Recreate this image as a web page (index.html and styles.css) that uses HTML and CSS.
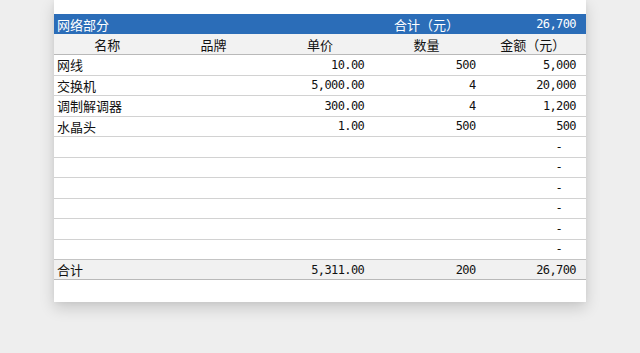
FILE: index.html
```html
<!DOCTYPE html>
<html lang="zh-CN">
<head>
<meta charset="utf-8">
<link rel="stylesheet" href="styles.css">
</head>
<body>
<div class="card">
  <div class="row bar">
    <div class="c left">网络部分</div>
    <div class="c"></div>
    <div class="c"></div>
    <div class="c center">合计（元）</div>
    <div class="c right r5 num">26,700</div>
  </div>
  <div class="row head">
    <div class="c center">名称</div>
    <div class="c center">品牌</div>
    <div class="c center">单价</div>
    <div class="c center">数量</div>
    <div class="c center">金额（元）</div>
  </div>
  <div class="row data">
    <div class="c left">网线</div><div class="c"></div>
    <div class="c right r3 num">10.00</div><div class="c right r4 num">500</div><div class="c right r5 num">5,000</div>
  </div>
  <div class="row data">
    <div class="c left">交换机</div><div class="c"></div>
    <div class="c right r3 num">5,000.00</div><div class="c right r4 num">4</div><div class="c right r5 num">20,000</div>
  </div>
  <div class="row data">
    <div class="c left">调制解调器</div><div class="c"></div>
    <div class="c right r3 num">300.00</div><div class="c right r4 num">4</div><div class="c right r5 num">1,200</div>
  </div>
  <div class="row data">
    <div class="c left">水晶头</div><div class="c"></div>
    <div class="c right r3 num">1.00</div><div class="c right r4 num">500</div><div class="c right r5 num">500</div>
  </div>
  <div class="row data"><div class="c"></div><div class="c"></div><div class="c"></div><div class="c"></div><div class="c right dash num">-</div></div>
  <div class="row data"><div class="c"></div><div class="c"></div><div class="c"></div><div class="c"></div><div class="c right dash num">-</div></div>
  <div class="row data"><div class="c"></div><div class="c"></div><div class="c"></div><div class="c"></div><div class="c right dash num">-</div></div>
  <div class="row data"><div class="c"></div><div class="c"></div><div class="c"></div><div class="c"></div><div class="c right dash num">-</div></div>
  <div class="row data"><div class="c"></div><div class="c"></div><div class="c"></div><div class="c"></div><div class="c right dash num">-</div></div>
  <div class="row data"><div class="c"></div><div class="c"></div><div class="c"></div><div class="c"></div><div class="c right dash num">-</div></div>
  <div class="row total">
    <div class="c left">合计</div><div class="c"></div>
    <div class="c right r3 num">5,311.00</div><div class="c right r4 num">200</div><div class="c right r5 num">26,700</div>
  </div>
</div>
</body>
</html>
```
FILE: styles.css
```css
html, body {
  margin: 0;
  padding: 0;
  background: #eeeeee;
}
body {
  font-family: "Noto Sans CJK SC", "Noto Sans", sans-serif;
  font-size: 13px;
  color: #111111;
  height: 353px;
  overflow: hidden;
}
.card {
  width: 532px;
  margin: 0 auto;
  background: #ffffff;
  padding-top: 14px;
  padding-bottom: 22px;
  box-shadow: 0 6px 14px rgba(0, 0, 0, 0.16), 0 0 6px rgba(0, 0, 0, 0.05);
}
.row {
  display: grid;
  grid-template-columns: repeat(5, 1fr);
  box-sizing: border-box;
}
.c {
  display: flex;
  align-items: center;
  white-space: nowrap;
}
.left { justify-content: flex-start; padding-left: 3px; }
.center { justify-content: center; }
.right { justify-content: flex-end; }
.r3 { padding-right: 9px; }
.r4 { padding-right: 4px; }
.r5 { padding-right: 10px; }
.dash { padding-right: 24px; }
.num {
  font-family: "DejaVu Sans Mono", monospace;
  font-size: 12px;
  letter-spacing: -0.6px;
}
.bar {
  height: 20px;
  background: #2b6db8;
  color: #ffffff;
}
.head {
  height: 21px;
  background: #f2f2f2;
  border-bottom: 1px solid #b9b9b9;
}
.data {
  height: 20.5px;
  border-bottom: 1px solid #d2d2d2;
}
.total {
  height: 21px;
  background: #f1f1f1;
  border-top: 1px solid #c4c4c4;
  border-bottom: 1px solid #b9b9b9;
  margin-top: -1px;
}
```
